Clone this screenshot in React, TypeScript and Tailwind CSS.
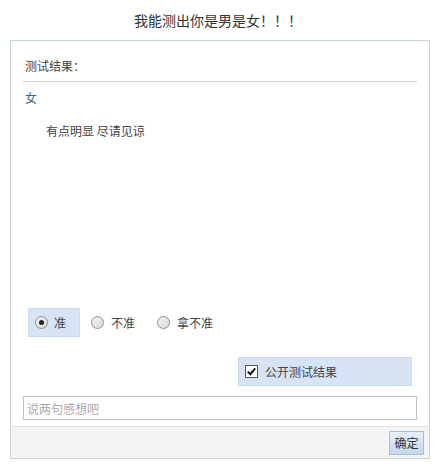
const font = { fontFamily: '"Noto Sans CJK SC", "Liberation Sans", sans-serif' };

function Radio({ checked }: { checked?: boolean }) {
  return (
    <span className="flex h-[13px] w-[13px] items-center justify-center rounded-full border border-[#8e8f8f] bg-gradient-to-br from-[#f4f4f4] to-[#d9d9d9]">
      {checked && <span className="h-[5px] w-[5px] rounded-full bg-[#222]"></span>}
    </span>
  );
}

export default function App() {
  const options = ["准", "不准", "拿不准"];

  return (
    <div className="h-[468px] w-[436px] bg-white text-[12px] text-[#444]" style={font}>
      {/* Title */}
      <div className="flex h-[40px] items-center justify-center text-[14px] text-[#333]">
        我能测出你是男是女！！！
      </div>

      {/* Panel */}
      <div className="ml-[10px] w-[420px] border border-[#c5d3dc]">
        <div className="px-[12px]">
          <div className="flex h-[41px] items-end border-b border-[#c8d3da] px-[2px] pb-[7px] leading-[16px]">
            测试结果：
          </div>
          <div className="mt-[8px] px-[2px] leading-[16px] text-[#336688]">女</div>
          <div className="mt-[17px] pl-[23px] leading-[16px]">有点明显 尽请见谅</div>

          <div className="h-[169px]"></div>

          {/* Options */}
          <div className="flex items-center">
            {options.map((o, i) => (
              <label
                key={o}
                className={
                  i === 0
                    ? "ml-[5px] flex h-[29px] w-[52px] items-center gap-[6px] border border-[#c9d9ee] bg-[#d6e4f5] pl-[6px]"
                    : "flex h-[29px] items-center gap-[7px] pl-[11px] pr-[11px]"
                }
              >
                <Radio checked={i === 0} />
                <span>{o}</span>
              </label>
            ))}
          </div>

          {/* Public result */}
          <div className="mt-[20px] flex justify-end pr-[5px]">
            <label className="flex h-[29px] w-[174px] items-center gap-[7px] border border-[#c9d9ee] bg-[#d6e4f5] pl-[6px]">
              <span className="flex h-[13px] w-[13px] items-center justify-center border border-[#555] bg-white">
                <svg viewBox="0 0 12 12" className="h-[11px] w-[11px]">
                  <path d="M2 6.2 L4.8 9 L10 2.5" fill="none" stroke="#111" strokeWidth="2.2" />
                </svg>
              </span>
              公开测试结果
            </label>
          </div>

          {/* Comment */}
          <input
            className="mt-[10px] block h-[24px] w-[394px] border border-[#c3c3c3] px-[3px] text-[12px] text-[#333] outline-none placeholder:text-[#aaa]"
            placeholder="说两句感想吧"
            style={font}
          />
        </div>

        {/* Footer */}
        <div className="mt-[6px] flex h-[32px] items-center justify-end border-t border-[#e3e3e3] bg-[#f4f4f4] pr-[5px]">
          <button
            className="h-[24px] w-[35px] border border-[#a9bfd6] bg-gradient-to-b from-[#e8f0f9] to-[#c3d7ee] text-[12px] text-[#333]"
            style={font}
          >
            确定
          </button>
        </div>
      </div>
    </div>
  );
}
